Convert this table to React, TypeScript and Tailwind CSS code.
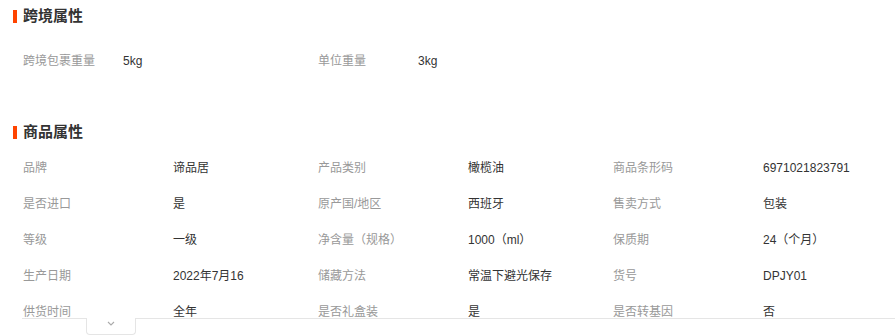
const CROSS = [
  { label: "跨境包裹重量", value: "5kg" },
  { label: "单位重量", value: "3kg" },
];

const PRODUCT = [
  { label: "品牌", value: "谛品居" },
  { label: "产品类别", value: "橄榄油" },
  { label: "商品条形码", value: "6971021823791" },
  { label: "是否进口", value: "是" },
  { label: "原产国/地区", value: "西班牙" },
  { label: "售卖方式", value: "包装" },
  { label: "等级", value: "一级" },
  { label: "净含量（规格）", value: "1000（ml）" },
  { label: "保质期", value: "24（个月）" },
  { label: "生产日期", value: "2022年7月16" },
  { label: "储藏方法", value: "常温下避光保存" },
  { label: "货号", value: "DPJY01" },
  { label: "供货时间", value: "全年" },
  { label: "是否礼盒装", value: "是" },
  { label: "是否转基因", value: "否" },
];

function SectionTitle({ title, className }: { title: string; className?: string }) {
  return (
    <div className={"flex h-[20px] items-center gap-[6px] pl-[13px] " + (className ?? "")}>
      <span className="h-[13px] w-[4px] bg-[#ff4400]" />
      <span className="text-[15px] font-bold text-[#333]">{title}</span>
    </div>
  );
}

function Prop({ label, value, labelWidth }: { label: string; value: string; labelWidth: string }) {
  return (
    <div className="flex h-[36px] items-center text-[12px]">
      <span className={"shrink-0 text-[#999] " + labelWidth}>{label}</span>
      <span className="text-[#333]">{value}</span>
    </div>
  );
}

export default function App() {
  return (
    <div
      className="h-[336px] w-[895px] overflow-hidden bg-white"
      style={{ fontFamily: '"Liberation Sans", "Noto Sans CJK SC", sans-serif' }}
    >
      <div className="h-[318px] overflow-hidden pt-[6px]">
        <SectionTitle title="跨境属性" />
        <div className="mt-[17px] grid grid-cols-[295px_295px_295px] pl-[23px]">
          {CROSS.map((p) => (
            <Prop key={p.label} label={p.label} value={p.value} labelWidth="w-[100px]" />
          ))}
        </div>

        <SectionTitle title="商品属性" className="mt-[43px]" />
        <div className="mt-[8px] grid grid-cols-[295px_295px_285px] pl-[23px]">
          {PRODUCT.map((p) => (
            <Prop key={p.label} label={p.label} value={p.value} labelWidth="w-[150px]" />
          ))}
        </div>
      </div>

      {/* 折叠条 */}
      <div className="ml-[22px] border-t border-[#e5e5e5]">
        <button className="-mt-px ml-[64px] flex h-[17px] w-[50px] justify-center rounded-b-[4px] border border-t-0 border-[#e5e5e5] bg-white pt-[3px]">
          <svg width="8" height="5" viewBox="0 0 8 5" fill="none">
            <polyline points="1,1 4,4 7,1" stroke="#aaa" strokeWidth="1.1" />
          </svg>
        </button>
      </div>
    </div>
  );
}
